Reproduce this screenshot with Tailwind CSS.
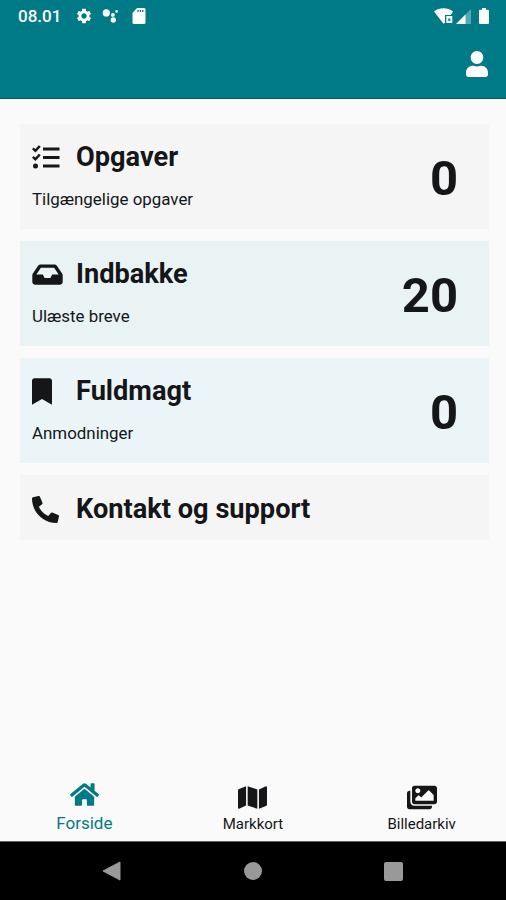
<!DOCTYPE html>
<html lang="da">
<head>
    <meta charset="UTF-8">
    <meta name="viewport" content="width=device-width, initial-scale=1.0">
    <title>Forside</title>
    <script src="https://cdn.jsdelivr.net/npm/@tailwindcss/browser@4"></script>
</head>
<body class="bg-[#fafafa] font-['Roboto',sans-serif] text-[#141618]">
    <div class="w-[506px] h-[900px] flex flex-col overflow-hidden">
        <!-- Header -->
        <header class="h-[99px] shrink-0 bg-[#007a87] text-white border-b border-[#00606c]">
            <div class="h-8 pl-[18px] pr-[17px] flex items-center">
                <span class="w-[57px] text-[17px] font-medium leading-8 whitespace-nowrap">08.01</span>
                <svg class="w-[18px] h-[18px]" viewBox="0 0 24 24" fill="currentColor"><path d="M19.140 12.940c.040-.300.060-.610.060-.940 0-.320-.020-.640-.070-.940l2.030-1.580c.180-.140.230-.410.120-.610l-1.920-3.320c-.120-.220-.370-.290-.590-.220l-2.390.960c-.500-.380-1.030-.700-1.620-.940l-.360-2.540c-.040-.240-.240-.410-.480-.410h-3.840c-.240 0-.430.170-.470.410l-.360 2.540c-.590.240-1.130.570-1.620.940l-2.390-.960c-.220-.080-.470 0-.590.220L2.740 8.870c-.120.210-.080.470.120.610l2.030 1.580c-.050.300-.090.630-.090.940s.020.640.070.940l-2.030 1.580c-.180.140-.230.410-.120.610l1.920 3.320c.120.220.370.290.590.220l2.390-.960c.500.380 1.030.700 1.620.940l.360 2.540c.050.240.240.410.480.410h3.840c.240 0 .440-.170.470-.410l.360-2.540c.590-.240 1.130-.560 1.620-.940l2.390.960c.220.080.470 0 .590-.220l1.920-3.320c.120-.220.070-.470-.120-.610l-2.010-1.580zM12 15.600c-1.980 0-3.600-1.620-3.600-3.600s1.620-3.600 3.600-3.600 3.600 1.620 3.600 3.600-1.620 3.600-3.600 3.600z"/></svg>
                <svg class="ml-[9px] w-4 h-4" viewBox="0 0 16 16" fill="currentColor"><circle cx="4.300" cy="4.900" r="3.600"/><circle cx="10.900" cy="6.900" r="1.900"/><circle cx="11.300" cy="12" r="2.700"/><circle cx="14.600" cy="3.400" r="1.300"/></svg>
                <svg class="ml-[14px] w-[14px] h-4" viewBox="0 0 14 16" fill="currentColor"><path fill-rule="evenodd" d="M5 0h7a1.500 1.500 0 0 1 1.500 1.500v13A1.500 1.500 0 0 1 12 16H2a1.500 1.500 0 0 1-1.500-1.500V5zM5.500 2v2h1.300V2zm2.300 0v2h1.300V2zm2.300 0v2h1.300V2z"/></svg>
                <div class="ml-auto flex items-center">
                    <svg class="w-5 h-4" viewBox="0 0 20 16" fill="currentColor"><path fill-rule="evenodd" d="M0 3.500C5.500-.8 13.500-.8 19 3.500L16.800 7H11v7.800L9.500 15.800z"/><path fill-rule="evenodd" d="M12.300 8h6v7h-6zm2 2.500v2.500h2v-2.500z"/></svg>
                    <svg class="ml-[2px] w-[15px] h-[15px]" viewBox="0 0 15 15" fill="currentColor"><path d="M15 0v15H0z" opacity=".35"/><path d="M9.500 5.500V15H0z"/></svg>
                    <svg class="ml-[8px] w-[10px] h-4" viewBox="0 0 10 16" fill="currentColor"><path d="M3 0h4v1.700h2a1 1 0 0 1 1 1V15a1 1 0 0 1-1 1H1a1 1 0 0 1-1-1V2.700a1 1 0 0 1 1-1h2z"/></svg>
                </div>
            </div>
            <div class="flex justify-end pt-[19px] pr-[18px]">
                <svg class="w-[22px] h-[26px]" viewBox="0 0 448 512" preserveAspectRatio="none" fill="currentColor"><path d="M224 256c70.700 0 128-57.300 128-128S294.700 0 224 0 96 57.300 96 128s57.300 128 128 128zm89.600 32h-16.700c-22.200 10.200-46.900 16-72.900 16s-50.600-5.800-72.900-16h-16.700C60.200 288 0 348.200 0 422.400V464c0 26.500 21.500 48 48 48h352c26.500 0 48-21.500 48-48v-41.600c0-74.200-60.200-134.400-134.400-134.400z"/></svg>
            </div>
        </header>

        <!-- Cards -->
        <main class="flex-1 pt-[25px] pl-5 pr-[17px] flex flex-col gap-[12.500px]">
            <section class="h-[104.500px] pl-3 pr-[31px] bg-[#f5f5f5] flex items-center justify-between">
                <div class="h-full pt-[15px]">
                    <div class="h-9 flex items-center">
                        <div class="w-11">
                            <svg class="w-[28px] h-[24px]" viewBox="0 0 28 24" fill="none" stroke="currentColor" stroke-width="2.800"><path d="M11 4h16.500M11 12.500h16.500M11 21h16.500"/><path d="M.8 3.300l2.600 2.500L7.800 1M.8 11.800l2.600 2.500 4.400-4.800" stroke-width="2.500"/><circle cx="3.500" cy="21" r="2.500" fill="currentColor" stroke="none"/></svg>
                        </div>
                        <h2 class="text-[27.200px] font-bold leading-9">Opgaver</h2>
                    </div>
                    <p class="mt-[12px] text-[16.900px] leading-6">Tilgængelige opgaver</p>
                </div>
                <span class="pt-1 text-[49px] font-bold leading-none">0</span>
            </section>

            <section class="h-[104.500px] pl-3 pr-[31px] bg-[#e9f3f4] flex items-center justify-between">
                <div class="h-full pt-[15px]">
                    <div class="h-9 flex items-center">
                        <div class="w-11">
                            <svg class="w-[31px] h-[27px]" viewBox="0 0 576 512" fill="currentColor"><path d="M567.938 243.908L462.250 85.374A48.003 48.003 0 0 0 422.311 64H153.689a48 48 0 0 0-39.938 21.374L8.062 243.908A47.994 47.994 0 0 0 0 270.533V400c0 26.510 21.490 48 48 48h480c26.510 0 48-21.490 48-48V270.533a47.994 47.994 0 0 0-8.062-26.625zM162.252 128h251.497l85.333 128H376l-32 64H232l-32-64H76.918l85.334-128z"/></svg>
                        </div>
                        <h2 class="text-[27.200px] font-bold leading-9">Indbakke</h2>
                    </div>
                    <p class="mt-[12px] text-[16.900px] leading-6">Ulæste breve</p>
                </div>
                <span class="pt-1 text-[49px] font-bold leading-none">20</span>
            </section>

            <section class="h-[104.500px] pl-3 pr-[31px] bg-[#ebf5f8] flex items-center justify-between">
                <div class="h-full pt-[15px]">
                    <div class="h-9 flex items-center">
                        <div class="w-11">
                            <svg class="w-[20px] h-[27px]" viewBox="0 0 384 512" fill="currentColor"><path d="M0 512V48C0 21.490 21.490 0 48 0h288c26.510 0 48 21.490 48 48v464L192 400 0 512z"/></svg>
                        </div>
                        <h2 class="text-[27.200px] font-bold leading-9">Fuldmagt</h2>
                    </div>
                    <p class="mt-[12px] text-[16.900px] leading-6">Anmodninger</p>
                </div>
                <span class="pt-1 text-[49px] font-bold leading-none">0</span>
            </section>

            <section class="h-[65px] pl-3 pt-[16px] bg-[#f5f5f5]">
                <div class="h-9 flex items-center">
                    <div class="w-11">
                        <svg class="w-[27px] h-[27px]" viewBox="0 0 512 512" fill="currentColor"><path d="M497.390 361.800l-112-48a24 24 0 0 0-28 6.900l-49.600 60.600A370.660 370.660 0 0 1 130.600 204.110l60.600-49.600a23.940 23.940 0 0 0 6.900-28l-48-112A24.160 24.160 0 0 0 122.600.610l-104 24A24 24 0 0 0 0 48c0 256.500 207.900 464 464 464a24 24 0 0 0 23.400-18.600l24-104a24.290 24.290 0 0 0-14.010-27.600z"/></svg>
                    </div>
                    <h2 class="text-[27.200px] font-bold leading-9">Kontakt og support</h2>
                </div>
            </section>
        </main>

        <!-- Tabs -->
        <nav class="h-[64px] shrink-0 grid grid-cols-3 text-[15px] text-center">
            <a class="flex flex-col items-center pt-[4px] text-[17px] text-[#007a87]">
                <svg class="w-[29px] h-[27px]" viewBox="0 0 576 512" fill="currentColor"><path d="M280.370 148.260L96 300.110V464a16 16 0 0 0 16 16l112.060-.290a16 16 0 0 0 15.920-16V368a16 16 0 0 1 16-16h64a16 16 0 0 1 16 16v95.640a16 16 0 0 0 16 16.050L464 480a16 16 0 0 0 16-16V300L295.670 148.260a12.190 12.190 0 0 0-15.300 0zM571.600 251.470L488 182.560V44.050a12 12 0 0 0-12-12h-56a12 12 0 0 0-12 12v72.610L318.470 43a48 48 0 0 0-61 0L4.340 251.470a12 12 0 0 0-1.600 16.900l25.500 31A12 12 0 0 0 45.150 301l235.220-193.740a12.190 12.190 0 0 1 15.300 0L530.900 301a12 12 0 0 0 16.900-1.600l25.500-31a12 12 0 0 0-1.700-16.930z"/></svg>
                <span class="mt-[5px] leading-5">Forside</span>
            </a>
            <a class="flex flex-col items-center pt-[7px]">
                <svg class="w-[29px] h-[27px]" viewBox="0 0 576 512" fill="currentColor"><path d="M0 117.660v346.320c0 11.320 11.430 19.060 21.940 14.860L160 416V32L20.120 87.950A32.006 32.006 0 0 0 0 117.660zM192 416l192 64V96L192 32v384zM554.060 33.160L416 96v384l139.880-55.950A31.996 31.996 0 0 0 576 394.340V48.020c0-11.320-11.430-19.060-21.940-14.860z"/></svg>
                <span class="mt-[3px] leading-5">Markkort</span>
            </a>
            <a class="flex flex-col items-center pt-[7px]">
                <svg class="w-[30px] h-[27px]" viewBox="0 0 576 512" fill="currentColor"><path d="M480 416v16c0 26.510-21.490 48-48 48H48c-26.510 0-48-21.490-48-48V176c0-26.510 21.490-48 48-48h16v208c0 44.112 35.888 80 80 80h336zm96-80V80c0-26.510-21.490-48-48-48H144c-26.510 0-48 21.490-48 48v256c0 26.510 21.490 48 48 48h384c26.510 0 48-21.490 48-48zM256 128c0 26.510-21.490 48-48 48s-48-21.490-48-48 21.490-48 48-48 48 21.490 48 48zm-96 144l55.515-55.515c4.686-4.686 12.284-4.686 16.971 0L272 256l135.515-135.515c4.686-4.686 12.284-4.686 16.971 0L512 208v112H160v-48z"/></svg>
                <span class="mt-[3px] leading-5">Billedarkiv</span>
            </a>
        </nav>

        <!-- Android navigation -->
        <div class="h-[59px] shrink-0 bg-black border-t border-[#666] flex items-center justify-between pl-[102px] pr-[103px] text-[#999]">
            <svg class="w-[19px] h-[20px]" viewBox="0 0 19 20" fill="currentColor" stroke="currentColor" stroke-linejoin="round"><path d="M18 1v18L1 10z"/></svg>
            <div class="w-[18px] h-[18px] rounded-full bg-[#999]"></div>
            <div class="w-[19px] h-[19px] rounded-[2px] bg-[#999]"></div>
        </div>
    </div>
</body>
</html>
